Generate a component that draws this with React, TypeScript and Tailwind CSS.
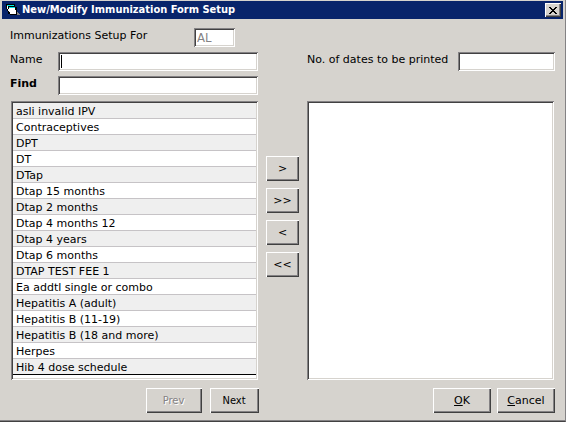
import type { ReactNode } from "react";

const raised =
  "bg-[#d6d3ce] shadow-[inset_1px_1px_#ffffff,inset_-1px_-1px_#404040,inset_-2px_-2px_#848284]";
const sunken =
  "bg-white shadow-[inset_1px_1px_#848284,inset_-1px_-1px_#ffffff,inset_2px_2px_#424142,inset_-2px_-2px_#d6d3ce]";
const field = `${sunken} h-[19px] min-w-0 px-[3px] leading-4 outline-none`;

const immunizations = [
  "asli invalid IPV",
  "Contraceptives",
  "DPT",
  "DT",
  "DTap",
  "Dtap 15 months",
  "Dtap 2 months",
  "Dtap 4 months 12",
  "Dtap 4 years",
  "Dtap 6 months",
  "DTAP TEST FEE 1",
  "Ea addtl single or combo",
  "Hepatitis A (adult)",
  "Hepatitis B (11-19)",
  "Hepatitis B (18 and more)",
  "Herpes",
  "Hib 4 dose schedule",
];

function Button({
  children,
  className = "",
  disabled = false,
  label,
}: {
  children: ReactNode;
  className?: string;
  disabled?: boolean;
  label?: string;
}) {
  return (
    <button
      type="button"
      disabled={disabled}
      aria-label={label}
      className={`${raised} h-[25px] shrink-0 text-[11px] leading-4 ${className}`}
    >
      {children}
    </button>
  );
}

function FormIcon() {
  return (
    <svg width="14" height="12" viewBox="0 0 14 12" shapeRendering="crispEdges" aria-hidden="true">
      <path d="M0 0h9v3h2v8H4v-1H2V7H1V5H0z" fill="#000" />
      <path d="M1 1h7v1H1zM3 3h6v1H3z" fill="#00e6e6" />
      <path d="M1 2h1v3H1zM2 5h1v2H2zM3 4h6v2h1v4H4V8H3z" fill="#fff" />
      <path d="M11 8h1v1h1v1h1v1h-3z" fill="#848284" />
    </svg>
  );
}

export default function App() {
  return (
    <main className="flex min-w-[540px] flex-col border-r border-b border-r-[#848284] border-b-[#424142] bg-[#d6d3ce] font-['Verdana','DejaVu_Sans',sans-serif] text-[11px] leading-4 text-black">
      <div className="flex flex-col border-b border-[#848284] pt-px">
        <header className="mr-[2px] ml-[2px] flex h-[18px] items-center bg-[#08246b] pr-[2px] pl-1 text-white">
          <FormIcon />
          <h1 className="ml-[2px] flex-1 font-['Tahoma','DejaVu_Sans_Condensed','DejaVu_Sans',sans-serif] text-[11px] font-bold">
            New/Modify Immunization Form Setup
          </h1>
          <button
            type="button"
            aria-label="Close"
            className={`${raised} flex h-[14px] w-4 items-center justify-center text-black`}
          >
            <svg width="8" height="7" viewBox="0 0 8 7" shapeRendering="crispEdges" aria-hidden="true">
              <path
                d="M0 0h2v1H0zM6 0h2v1H6zM1 1h2v1H1zM5 1h2v1H5zM2 2h4v1H2zM3 3h2v1H3zM2 4h4v1H2zM1 5h2v1H1zM5 5h2v1H5zM0 6h2v1H0zM6 6h2v1H6z"
                fill="currentColor"
              />
            </svg>
          </button>
        </header>

        <form className="flex flex-col px-[10px] pt-[9px] pb-[7px]" onSubmit={(e) => e.preventDefault()}>
          <div className="flex h-6 items-start">
            <label htmlFor="state" className="w-[184px]">
              Immunizations Setup For
            </label>
            <input
              id="state"
              disabled
              defaultValue="AL"
              className={`${field} w-[41px] font-['Tahoma','DejaVu_Sans_Condensed','DejaVu_Sans',sans-serif] text-[13px] text-[#848284]`}
            />
          </div>
          <div className="flex items-start">
            <div className="flex flex-1 flex-col">
              <div className="flex h-6 items-start">
                <label htmlFor="name" className="w-12">
                  Name
                </label>
                <div className="relative flex flex-1">
                  <input id="name" autoFocus className={`${field} flex-1 caret-transparent`} />
                  <span aria-hidden="true" className="absolute top-[3px] left-[3px] h-[13px] w-px bg-black" />
                </div>
              </div>
              <div className="flex h-[25px] items-start">
                <label htmlFor="find" className="w-12 font-bold">
                  Find
                </label>
                <input id="find" className={`${field} flex-1`} />
              </div>
            </div>
            <div className="w-[49px] shrink-0" />
            <div className="flex flex-1 items-start justify-between">
              <label htmlFor="dates" className="whitespace-nowrap">
                No. of dates to be printed
              </label>
              <input id="dates" className={`${field} w-[97px]`} />
            </div>
          </div>

          <div className="flex px-px">
            <ul className={`${sunken} min-w-0 flex-1 p-[2px] pb-[5px]`}>
              {immunizations.map((name) => (
                <li
                  key={name}
                  className="h-4 border-b border-[#c6c3c6] pl-[3px] leading-[17px] whitespace-nowrap odd:bg-[#efefef] last:border-black"
                >
                  {name}
                </li>
              ))}
            </ul>
            <div className="flex w-[49px] shrink-0 flex-col items-center gap-[7px] pt-[55px]">
              <Button className="w-[33px]" label="Add">&gt;</Button>
              <Button className="w-[33px]" label="Add all">&gt;&gt;</Button>
              <Button className="w-[33px]" label="Remove">&lt;</Button>
              <Button className="w-[33px]" label="Remove all">&lt;&lt;</Button>
            </div>
            <ul aria-label="Selected immunizations" className={`${sunken} min-w-0 flex-1 p-[2px]`} />
          </div>

          <div className="flex pt-2">
            <div className="flex flex-1 justify-end gap-2 font-['Tahoma','DejaVu_Sans_Condensed','DejaVu_Sans',sans-serif]">
              <Button disabled className="w-14 text-[#848284] [text-shadow:1px_1px_#ffffff]">
                Prev
              </Button>
              <Button className="w-[49px]">Next</Button>
            </div>
            <div className="w-12 shrink-0" />
            <div className="flex flex-1 justify-end gap-[6px]">
              <Button className="w-[58px]">
                <span className="underline underline-offset-1">O</span>K
              </Button>
              <Button className="w-[58px]">
                <span className="underline underline-offset-1">C</span>ancel
              </Button>
            </div>
          </div>
        </form>
      </div>
    </main>
  );
}
